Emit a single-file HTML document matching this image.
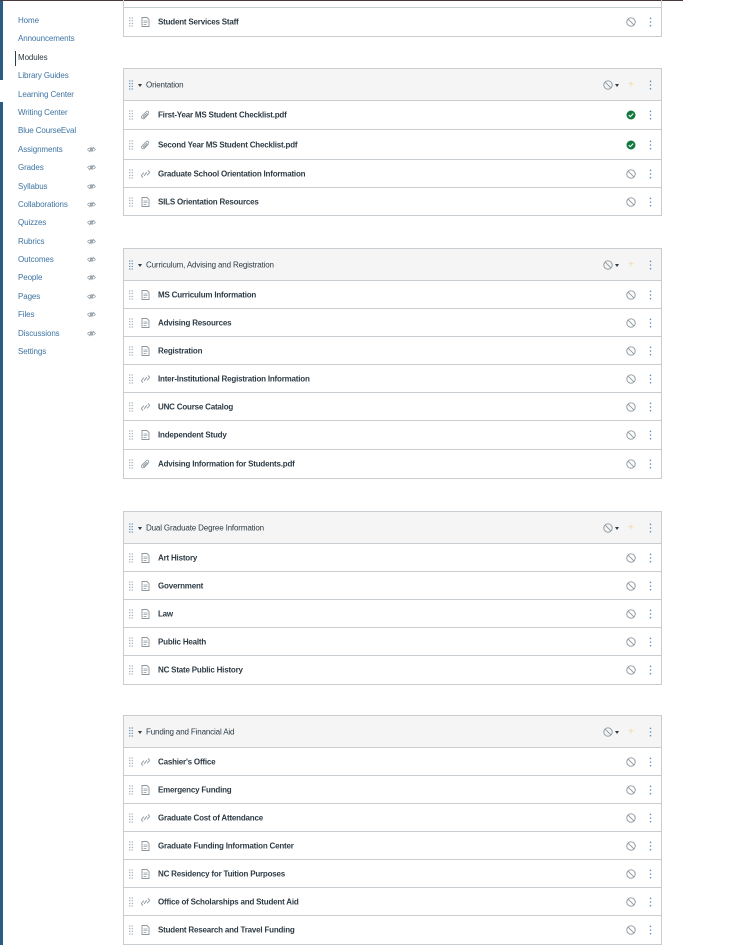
<!DOCTYPE html>
<html><head><meta charset="utf-8">
<style>
*{box-sizing:border-box;margin:0;padding:0}
body{width:756px;height:945px;overflow:hidden;background:#fff;font-family:"Liberation Sans",sans-serif;position:relative}
.topline{position:absolute;left:0;top:0;width:683px;height:1px;background:#4a3b3b}
.lbar{position:absolute;left:0;top:0;width:3px;height:945px;background:#2a5c84}
.lgap{position:absolute;left:0;top:80px;width:3px;height:22px;background:#fff}
.nav{position:absolute;left:18px;font-size:8px;color:#3d74a3;white-space:nowrap;letter-spacing:-0.1px}
.nav.act{color:#2d3b45;left:18px}
.actbar{position:absolute;left:15px;top:51px;width:1px;height:15px;background:#2d3b45}
.eye{position:absolute;left:87px;width:9px;height:7px}
.mod{position:absolute;left:123px;width:539px;border:1px solid #c7cdd1}
.hdr{height:32px;background:#f5f5f5;border-bottom:1px solid #c7cdd1;position:relative;font-size:8px;color:#2d3b45}
.row{position:relative;border-bottom:1px solid #c7cdd1;font-size:8px;color:#2d3b45;font-weight:bold}
.row:last-child{border-bottom:none}
.t{position:absolute;left:34px;top:50%;transform:translateY(-50%);white-space:nowrap;letter-spacing:-0.2px}
.ht{position:absolute;left:22px;top:50%;transform:translateY(-50%);white-space:nowrap;letter-spacing:-0.15px}
.drag{position:absolute;left:5px;top:50%;margin-top:-5px;width:4px;height:10px}
.ico{position:absolute;left:17px;top:50%;margin-top:-5px;width:9px;height:10px}
.ban{position:absolute;left:502px;top:50%;margin-top:-5px;width:10px;height:10px}
.keb{position:absolute;left:525px;top:50%;margin-top:-5px;width:3px;height:10px}
.hban{left:479px}
.caret{position:absolute;left:14px;top:50%;margin-top:-1px;border-left:2px solid transparent;border-right:2px solid transparent;border-top:3px solid #2d3b45}
.hcaret{position:absolute;left:491px;top:50%;margin-top:-1px;border-left:2px solid transparent;border-right:2px solid transparent;border-top:3px solid #2d3b45}
.plus{position:absolute;left:504px;top:50%;transform:translateY(-50%);color:#f0d9a0;font-size:10px;font-weight:normal}
</style></head><body>
<div class="lbar"></div><div class="lgap"></div>
<div class="topline"></div>

<div class="nav" style="top:16px">Home</div>
<div class="nav" style="top:34px">Announcements</div>
<div class="actbar"></div>
<div class="nav act" style="top:53px">Modules</div>
<div class="nav" style="top:71px">Library Guides</div>
<div class="nav" style="top:90px">Learning Center</div>
<div class="nav" style="top:108px">Writing Center</div>
<div class="nav" style="top:126px">Blue CourseEval</div>
<div class="nav" style="top:145px">Assignments</div>
<div class="nav" style="top:163px">Grades</div>
<div class="nav" style="top:182px">Syllabus</div>
<div class="nav" style="top:200px">Collaborations</div>
<div class="nav" style="top:218px">Quizzes</div>
<div class="nav" style="top:237px">Rubrics</div>
<div class="nav" style="top:255px">Outcomes</div>
<div class="nav" style="top:273px">People</div>
<div class="nav" style="top:292px">Pages</div>
<div class="nav" style="top:310px">Files</div>
<div class="nav" style="top:329px">Discussions</div>
<div class="nav" style="top:347px">Settings</div>
<svg width="0" height="0" style="position:absolute">
<defs>
<symbol id="eye" viewBox="0 0 10 8"><path d="M0.5 4C2 1.5 8 1.5 9.5 4C8 6.5 2 6.5 0.5 4Z" fill="none" stroke="#8b969e" stroke-width="0.8"/><circle cx="5" cy="4" r="1.3" fill="none" stroke="#8b969e" stroke-width="0.8"/><path d="M2 7L8 1" stroke="#8b969e" stroke-width="0.8"/></symbol>
<symbol id="page" viewBox="0 0 9 10"><path d="M1 0.5H6L8 2.5V9.5H1Z" fill="none" stroke="#8b969e" stroke-width="0.9"/><path d="M2.5 4H6.5M2.5 5.7H6.5M2.5 7.4H5.5" stroke="#8b969e" stroke-width="0.7"/></symbol>
<symbol id="link" viewBox="0 0 9 10"><path d="M2 8.5L1 7.5C0.5 7 0.5 6.2 1 5.7L3 3.7M7 1.5L8 2.5C8.5 3 8.5 3.8 8 4.3L6 6.3M3.2 6.8L5.8 3.2" fill="none" stroke="#8b969e" stroke-width="0.9"/></symbol>
<symbol id="clip" viewBox="0 0 9 10"><path d="M7.5 4L3.5 8.2C2.6 9.1 1.3 9 0.8 8.3C0.2 7.6 0.4 6.6 1.2 5.8L5.3 1.6C5.9 1 6.8 1 7.3 1.5C7.8 2 7.8 2.8 7.2 3.4L3.4 7.3C3.1 7.6 2.6 7.6 2.4 7.3C2.1 7 2.2 6.6 2.5 6.3L5.8 3" fill="none" stroke="#8b969e" stroke-width="0.8"/></symbol>
<symbol id="ban" viewBox="0 0 10 10"><circle cx="5" cy="5" r="4.2" fill="none" stroke="#8b969e" stroke-width="0.9"/><path d="M2.1 2.1L7.9 7.9" stroke="#8b969e" stroke-width="0.9"/></symbol>
<symbol id="ok" viewBox="0 0 10 10"><circle cx="5" cy="5" r="4.5" fill="#127a3f"/><path d="M2.8 5.2L4.3 6.6L7.2 3.6" fill="none" stroke="#fff" stroke-width="1.1"/></symbol>
<symbol id="drag" viewBox="0 0 4 10"><g fill="#8b969e"><circle cx="0.8" cy="1" r="0.6"/><circle cx="3.2" cy="1" r="0.6"/><circle cx="0.8" cy="3.7" r="0.6"/><circle cx="3.2" cy="3.7" r="0.6"/><circle cx="0.8" cy="6.4" r="0.6"/><circle cx="3.2" cy="6.4" r="0.6"/><circle cx="0.8" cy="9" r="0.6"/><circle cx="3.2" cy="9" r="0.6"/></g></symbol>
<symbol id="dragb" viewBox="0 0 4 10"><g fill="#3d74a3"><circle cx="0.8" cy="1" r="0.6"/><circle cx="3.2" cy="1" r="0.6"/><circle cx="0.8" cy="3.7" r="0.6"/><circle cx="3.2" cy="3.7" r="0.6"/><circle cx="0.8" cy="6.4" r="0.6"/><circle cx="3.2" cy="6.4" r="0.6"/><circle cx="0.8" cy="9" r="0.6"/><circle cx="3.2" cy="9" r="0.6"/></g></symbol>
<symbol id="keb" viewBox="0 0 3 10"><g fill="#5a8fbf"><circle cx="1.5" cy="1.3" r="0.8"/><circle cx="1.5" cy="5" r="0.8"/><circle cx="1.5" cy="8.7" r="0.8"/></g></symbol>
</defs></svg>
<svg class="eye" style="top:146px"><use href="#eye"/></svg>
<svg class="eye" style="top:164px"><use href="#eye"/></svg>
<svg class="eye" style="top:183px"><use href="#eye"/></svg>
<svg class="eye" style="top:201px"><use href="#eye"/></svg>
<svg class="eye" style="top:219px"><use href="#eye"/></svg>
<svg class="eye" style="top:238px"><use href="#eye"/></svg>
<svg class="eye" style="top:256px"><use href="#eye"/></svg>
<svg class="eye" style="top:274px"><use href="#eye"/></svg>
<svg class="eye" style="top:293px"><use href="#eye"/></svg>
<svg class="eye" style="top:311px"><use href="#eye"/></svg>
<svg class="eye" style="top:330px"><use href="#eye"/></svg>

<div class="mod" style="top:-2px;height:39px">
<div class="row" style="height:9px"></div>
<div class="row" style="height:28px"><svg class="drag"><use href="#drag"/></svg><svg class="ico"><use href="#page"/></svg><span class="t">Student Services Staff</span><svg class="ban"><use href="#ban"/></svg><svg class="keb"><use href="#keb"/></svg></div>
</div>

<div class="mod" style="top:68px">
<div class="hdr"><svg class="drag"><use href="#dragb"/></svg><span class="caret"></span><span class="ht">Orientation</span><svg class="ban hban"><use href="#ban"/></svg><span class="hcaret"></span><span class="plus">+</span><svg class="keb"><use href="#keb"/></svg></div>
<div class="row" style="height:29px"><svg class="drag"><use href="#drag"/></svg><svg class="ico"><use href="#clip"/></svg><span class="t">First-Year MS Student Checklist.pdf</span><svg class="ban"><use href="#ok"/></svg><svg class="keb"><use href="#keb"/></svg></div>
<div class="row" style="height:30px"><svg class="drag"><use href="#drag"/></svg><svg class="ico"><use href="#clip"/></svg><span class="t">Second Year MS Student Checklist.pdf</span><svg class="ban"><use href="#ok"/></svg><svg class="keb"><use href="#keb"/></svg></div>
<div class="row" style="height:28px"><svg class="drag"><use href="#drag"/></svg><svg class="ico"><use href="#link"/></svg><span class="t">Graduate School Orientation Information</span><svg class="ban"><use href="#ban"/></svg><svg class="keb"><use href="#keb"/></svg></div>
<div class="row" style="height:27px"><svg class="drag"><use href="#drag"/></svg><svg class="ico"><use href="#page"/></svg><span class="t">SILS Orientation Resources</span><svg class="ban"><use href="#ban"/></svg><svg class="keb"><use href="#keb"/></svg></div>
</div>

<div class="mod" style="top:248px">
<div class="hdr"><svg class="drag"><use href="#dragb"/></svg><span class="caret"></span><span class="ht">Curriculum, Advising and Registration</span><svg class="ban hban"><use href="#ban"/></svg><span class="hcaret"></span><span class="plus">+</span><svg class="keb"><use href="#keb"/></svg></div>
<div class="row" style="height:28px"><svg class="drag"><use href="#drag"/></svg><svg class="ico"><use href="#page"/></svg><span class="t">MS Curriculum Information</span><svg class="ban"><use href="#ban"/></svg><svg class="keb"><use href="#keb"/></svg></div>
<div class="row" style="height:28px"><svg class="drag"><use href="#drag"/></svg><svg class="ico"><use href="#page"/></svg><span class="t">Advising Resources</span><svg class="ban"><use href="#ban"/></svg><svg class="keb"><use href="#keb"/></svg></div>
<div class="row" style="height:28px"><svg class="drag"><use href="#drag"/></svg><svg class="ico"><use href="#page"/></svg><span class="t">Registration</span><svg class="ban"><use href="#ban"/></svg><svg class="keb"><use href="#keb"/></svg></div>
<div class="row" style="height:28px"><svg class="drag"><use href="#drag"/></svg><svg class="ico"><use href="#link"/></svg><span class="t">Inter-Institutional Registration Information</span><svg class="ban"><use href="#ban"/></svg><svg class="keb"><use href="#keb"/></svg></div>
<div class="row" style="height:28px"><svg class="drag"><use href="#drag"/></svg><svg class="ico"><use href="#link"/></svg><span class="t">UNC Course Catalog</span><svg class="ban"><use href="#ban"/></svg><svg class="keb"><use href="#keb"/></svg></div>
<div class="row" style="height:29px"><svg class="drag"><use href="#drag"/></svg><svg class="ico"><use href="#page"/></svg><span class="t">Independent Study</span><svg class="ban"><use href="#ban"/></svg><svg class="keb"><use href="#keb"/></svg></div>
<div class="row" style="height:28px"><svg class="drag"><use href="#drag"/></svg><svg class="ico"><use href="#clip"/></svg><span class="t">Advising Information for Students.pdf</span><svg class="ban"><use href="#ban"/></svg><svg class="keb"><use href="#keb"/></svg></div>
</div>

<div class="mod" style="top:511px">
<div class="hdr"><svg class="drag"><use href="#dragb"/></svg><span class="caret"></span><span class="ht">Dual Graduate Degree Information</span><svg class="ban hban"><use href="#ban"/></svg><span class="hcaret"></span><span class="plus">+</span><svg class="keb"><use href="#keb"/></svg></div>
<div class="row" style="height:28px"><svg class="drag"><use href="#drag"/></svg><svg class="ico"><use href="#page"/></svg><span class="t">Art History</span><svg class="ban"><use href="#ban"/></svg><svg class="keb"><use href="#keb"/></svg></div>
<div class="row" style="height:28px"><svg class="drag"><use href="#drag"/></svg><svg class="ico"><use href="#page"/></svg><span class="t">Government</span><svg class="ban"><use href="#ban"/></svg><svg class="keb"><use href="#keb"/></svg></div>
<div class="row" style="height:28px"><svg class="drag"><use href="#drag"/></svg><svg class="ico"><use href="#page"/></svg><span class="t">Law</span><svg class="ban"><use href="#ban"/></svg><svg class="keb"><use href="#keb"/></svg></div>
<div class="row" style="height:28px"><svg class="drag"><use href="#drag"/></svg><svg class="ico"><use href="#page"/></svg><span class="t">Public Health</span><svg class="ban"><use href="#ban"/></svg><svg class="keb"><use href="#keb"/></svg></div>
<div class="row" style="height:28px"><svg class="drag"><use href="#drag"/></svg><svg class="ico"><use href="#page"/></svg><span class="t">NC State Public History</span><svg class="ban"><use href="#ban"/></svg><svg class="keb"><use href="#keb"/></svg></div>
</div>

<div class="mod" style="top:715px">
<div class="hdr"><svg class="drag"><use href="#dragb"/></svg><span class="caret"></span><span class="ht">Funding and Financial Aid</span><svg class="ban hban"><use href="#ban"/></svg><span class="hcaret"></span><span class="plus">+</span><svg class="keb"><use href="#keb"/></svg></div>
<div class="row" style="height:28px"><svg class="drag"><use href="#drag"/></svg><svg class="ico"><use href="#link"/></svg><span class="t">Cashier's Office</span><svg class="ban"><use href="#ban"/></svg><svg class="keb"><use href="#keb"/></svg></div>
<div class="row" style="height:28px"><svg class="drag"><use href="#drag"/></svg><svg class="ico"><use href="#page"/></svg><span class="t">Emergency Funding</span><svg class="ban"><use href="#ban"/></svg><svg class="keb"><use href="#keb"/></svg></div>
<div class="row" style="height:28px"><svg class="drag"><use href="#drag"/></svg><svg class="ico"><use href="#link"/></svg><span class="t">Graduate Cost of Attendance</span><svg class="ban"><use href="#ban"/></svg><svg class="keb"><use href="#keb"/></svg></div>
<div class="row" style="height:28px"><svg class="drag"><use href="#drag"/></svg><svg class="ico"><use href="#page"/></svg><span class="t">Graduate Funding Information Center</span><svg class="ban"><use href="#ban"/></svg><svg class="keb"><use href="#keb"/></svg></div>
<div class="row" style="height:28px"><svg class="drag"><use href="#drag"/></svg><svg class="ico"><use href="#page"/></svg><span class="t">NC Residency for Tuition Purposes</span><svg class="ban"><use href="#ban"/></svg><svg class="keb"><use href="#keb"/></svg></div>
<div class="row" style="height:28px"><svg class="drag"><use href="#drag"/></svg><svg class="ico"><use href="#link"/></svg><span class="t">Office of Scholarships and Student Aid</span><svg class="ban"><use href="#ban"/></svg><svg class="keb"><use href="#keb"/></svg></div>
<div class="row" style="height:28px"><svg class="drag"><use href="#drag"/></svg><svg class="ico"><use href="#page"/></svg><span class="t">Student Research and Travel Funding</span><svg class="ban"><use href="#ban"/></svg><svg class="keb"><use href="#keb"/></svg></div>
</div>
</body></html>
